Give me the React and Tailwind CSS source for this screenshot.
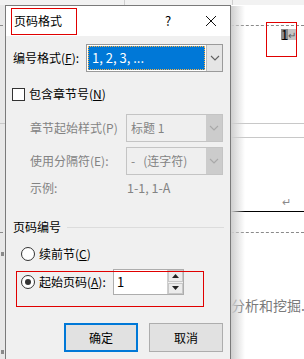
import React from 'react';

const font = { fontFamily: '"Microsoft YaHei", "Noto Sans CJK SC", "Noto Sans", sans-serif' };

function Chevron({ color = '#606060' }) {
    return (
        <svg width="10" height="6" viewBox="0 0 10 6">
            <path d="M1 1 L5 5 L9 1" fill="none" stroke={color} strokeWidth="1.1" />
        </svg>
    );
}

function Select({ children, width, disabled, selected }) {
    return (
        <div
            className={
                'flex h-[28px] border ' +
                (disabled ? 'border-[#c4c4c4] bg-[#efefef]' : 'border-[#9a9a9a] bg-white')
            }
            style={{ width }}
        >
            <div className="flex flex-1 items-center p-[1px]">
                {selected ? (
                    <div className="flex h-full w-full items-center border border-dotted border-[#f7b046] bg-[#0078d7] pl-[3px] text-[13px] text-white">
                        {children}
                    </div>
                ) : (
                    <div className="pl-[3px] text-[#838383]">{children}</div>
                )}
            </div>
            <div
                className={
                    'flex w-[16px] items-center justify-center ' +
                    (disabled ? 'bg-[#cccccc]' : 'border-l border-[#bdbdbd] bg-[#e5e5e5]')
                }
            >
                <Chevron color={disabled ? '#a8a8a8' : '#606060'} />
            </div>
        </div>
    );
}

function Radio({ checked }) {
    return (
        <div className="flex h-[14px] w-[14px] items-center justify-center rounded-full border border-[#333] bg-white">
            {checked && <div className="h-[6px] w-[6px] rounded-full bg-[#333]" />}
        </div>
    );
}

export default function App() {
    return (
        <div className="relative h-[359px] w-[304px] overflow-hidden bg-white text-[12px] text-black" style={font}>
            {/* document behind the dialog */}
            <div className="absolute left-0 top-0 h-[359px] w-[6px] bg-[#e8e8e8]" />
            <div className="absolute left-[1px] top-[252px] h-[4px] w-[3px] bg-[#8a8a8a]" />
            <div className="absolute left-[1px] top-[350px] h-[4px] w-[3px] bg-[#8a8a8a]" />
            <div className="absolute left-0 top-0 h-[5px] w-[304px] bg-[#f2f2f2]" />
            <div className="absolute left-[124px] top-0 h-[5px] w-px bg-[#cfcfcf]" />
            <div className="absolute left-[232px] top-0 h-[5px] w-px bg-[#cfcfcf]" />
            <div className="absolute left-0 top-[25px] w-[304px] border-t border-dashed border-[#8a8a8a]" />
            <div className="absolute left-0 top-[123px] h-px w-[304px] bg-[#c8c8c8]" />
            <div className="absolute left-[230px] top-[137px] h-px w-[74px] bg-[#c8c8c8]" />
            <div className="absolute left-[230px] top-[211px] h-px w-[74px] bg-black" />
            <div className="absolute left-0 top-[232px] w-[304px] border-t border-dashed border-[#8a8a8a]" />
            <div className="absolute left-[282px] top-[193px] text-[11px] text-[#8a8a8a]">↵</div>
            <div className="absolute left-[281px] top-[29px] flex h-[11px] items-center bg-[#c4c4c4] leading-none">
                <span className="flex h-full items-center bg-[#8c8c8c] text-[13px]">1</span>
                <span className="text-[10px] text-[#5a5a5a]">↵</span>
            </div>
            <div className="absolute left-[266px] top-[22px] h-[35px] w-[31px] border border-[#e00000]" />
            <div className="absolute left-[231px] top-[295px] whitespace-nowrap text-[14px] text-[#7a7a7a]">分析和挖掘.</div>
            <div className="absolute left-[231px] top-[6px] h-[353px] w-[14px] bg-gradient-to-r from-[#cfcfcf] to-transparent" />

            {/* dialog */}
            <div className="absolute left-[5px] top-[5px] flex h-[360px] w-[226px] flex-col border border-[#7a7a7a] bg-[#f0f0f0]">
                <div className="flex h-[30px] items-center bg-white pl-[8px]">
                    <span className="text-[12px]">页码格式</span>
                    <span className="ml-auto w-[14px] text-center text-[13px]">?</span>
                    <div className="ml-[30px] mr-[13px] flex h-[12px] w-[12px] items-center justify-center">
                        <svg width="12" height="12" viewBox="0 0 12 12">
                            <path d="M1 1 L11 11 M11 1 L1 11" stroke="#111" strokeWidth="1" />
                        </svg>
                    </div>
                </div>

                <div className="flex flex-col pl-[7px] pr-[6px]">
                    <div className="mt-[8px] flex h-[28px] items-center">
                        <span className="w-[73px]">编号格式(<u>F</u>):</span>
                        <Select width={137} selected>1, 2, 3, ...</Select>
                    </div>

                    <div className="mt-[13px] flex h-[18px] items-center">
                        <div className="ml-[-1px] h-[13px] w-[13px] border border-[#333] bg-white" />
                        <span className="ml-[4px]">包含章节号(<u>N</u>)</span>
                    </div>

                    <div className="mt-[11px] flex h-[28px] items-center pl-[17px]">
                        <span className="w-[96px] text-[#838383]">章节起始样式(P)</span>
                        <Select width={97} disabled>标题 1</Select>
                    </div>

                    <div className="mt-[5px] flex h-[28px] items-center pl-[17px]">
                        <span className="w-[96px] text-[#838383]">使用分隔符(E):</span>
                        <Select width={97} disabled>
                            <span className="whitespace-pre">-{'   '}(连字符)</span>
                        </Select>
                    </div>

                    <div className="mt-[5px] flex h-[16px] items-center pl-[17px] text-[#838383]">
                        <span className="w-[97px]">示例:</span>
                        <span className="text-[12.5px]">1-1, 1-A</span>
                    </div>

                    <div className="mt-[23px] flex h-[16px] items-center">
                        <span className="mr-[6px] whitespace-nowrap">页码编号</span>
                        <div className="h-px flex-1 bg-[#dcdcdc]" />
                    </div>

                    <div className="mt-[11px] flex h-[16px] items-center pl-[8px]">
                        <Radio />
                        <span className="ml-[4px]">续前节(<u>C</u>)</span>
                    </div>

                    <div className="mt-[7px] flex h-[26px] items-center pl-[8px]">
                        <Radio checked />
                        <span className="ml-[4px] w-[74px]">起始页码(<u>A</u>):</span>
                        <div className="flex h-[26px] w-[71px] border border-[#adadad] bg-white">
                            <div className="flex-1 pl-[3px] pt-[2px] text-[13px]">1</div>
                            <div className="flex w-[16px] flex-col gap-[1px] border-l border-[#cfcfcf] bg-[#f0f0f0]">
                                <div className="flex flex-1 items-center justify-center border border-[#c8c8c8] bg-[#ececec]">
                                    <svg width="7" height="4" viewBox="0 0 7 4"><path d="M0 4 L3.5 0 L7 4 Z" fill="#222" /></svg>
                                </div>
                                <div className="flex flex-1 items-center justify-center border border-[#c8c8c8] bg-[#ececec]">
                                    <svg width="7" height="4" viewBox="0 0 7 4"><path d="M0 0 L3.5 4 L7 0 Z" fill="#222" /></svg>
                                </div>
                            </div>
                        </div>
                    </div>

                    <div className="mt-[28px] flex h-[29px] justify-end gap-[11px] pr-[1px]">
                        <button className="w-[74px] border-2 border-[#0078d7] bg-[#e1e1e1]">确定</button>
                        <button className="w-[74px] border border-[#adadad] bg-[#e1e1e1]">取消</button>
                    </div>
                </div>
            </div>

            {/* annotation boxes */}
            <div className="absolute left-[11px] top-[8px] h-[27px] w-[66px] border border-[#e00000]" />
            <div className="absolute left-[16px] top-[271px] h-[36px] w-[188px] border border-[#e00000]" />
        </div>
    );
}
